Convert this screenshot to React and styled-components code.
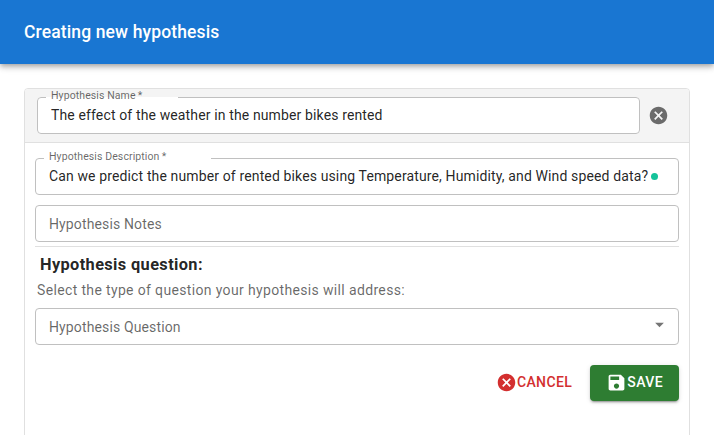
import React from "react";
import styled, { createGlobalStyle } from "styled-components";

const GlobalStyle = createGlobalStyle`
  *, *::before, *::after { box-sizing: border-box; }
  html, body { margin: 0; height: 100%; overflow: hidden; background: #fff; }
  body {
    font-family: Roboto, "Liberation Sans", sans-serif;
    font-size: 14px;
    line-height: 20px;
    letter-spacing: 0.131px;
    color: rgba(0, 0, 0, 0.87);
  }
`;

const Page = styled.div`
  display: flex;
  flex-direction: column;
  height: 100vh;
  overflow: hidden;
`;

const AppBar = styled.header`
  display: flex;
  align-items: center;
  flex: none;
  height: 64px;
  padding: 0 24px;
  background: #1976d2;
  color: #fff;
  box-shadow:
    0 2px 4px -1px rgba(0, 0, 0, 0.2),
    0 4px 5px 0 rgba(0, 0, 0, 0.14),
    0 1px 10px 0 rgba(0, 0, 0, 0.12);
`;

const Title = styled.h1`
  margin: 0;
  font-size: 17.5px;
  font-weight: 500;
  line-height: 28px;
`;

const Card = styled.main`
  flex: none;
  margin: 24px 24px 0;
  height: 400px;
  border: 1px solid #e0e0e0;
  border-radius: 4px;
  overflow: hidden;
`;

const CardHeader = styled.div`
  display: flex;
  align-items: center;
  gap: 8px;
  height: 54px;
  padding: 0 20px 0 12px;
  background: #f4f4f4;
  border-bottom: 1px solid #e0e0e0;
`;

const CardBody = styled.div`
  display: flex;
  flex-direction: column;
  padding: 15px 10px 0;
`;

const Field = styled.div`
  position: relative;
  display: flex;
  align-items: center;
  flex: ${(p) => (p.$grow ? "1" : "none")};
  height: 37px;
  padding: 0 14px;
  margin-top: ${(p) => p.$top || 0}px;
  background: #fff;
  border-radius: 4px;
  white-space: nowrap;
`;

const Outline = styled.fieldset`
  position: absolute;
  inset: -5px 0 0;
  margin: 0;
  padding: 0 8px;
  min-width: 0;
  border: 1px solid #c0c0c0;
  border-radius: 4px;
  pointer-events: none;
`;

const PlainOutline = styled(Outline)`
  inset: 0;
`;

const Notch = styled.legend`
  width: ${(p) => p.$width}px;
  height: 11px;
  padding: 0;
`;

const FloatingLabel = styled.label`
  position: absolute;
  top: 0;
  left: 0;
  transform-origin: top left;
  transform: translate(14px, -9px) scale(0.75);
  color: rgba(0, 0, 0, 0.6);
`;

const Value = styled.span`
  flex: none;
  padding-bottom: 2px;
`;

const Placeholder = styled.span`
  flex: 1;
  color: rgba(0, 0, 0, 0.6);
`;

const StatusDot = styled.i`
  flex: none;
  width: 7px;
  height: 7px;
  margin: 0 0 1px 2.5px;
  border-radius: 50%;
  background: #15c39a;
`;

const Divider = styled.hr`
  width: 100%;
  margin: 4px 0 0;
  border: 0;
  border-top: 1px solid #e0e0e0;
`;

const SectionTitle = styled.h3`
  margin: 8px 0 0 5px;
  font-size: 16.38px;
  font-weight: 700;
  line-height: 20px;
  letter-spacing: 0.37px;
`;

const HelpText = styled.p`
  margin: 5px 0 0 2px;
  letter-spacing: 0.35px;
  color: rgba(0, 0, 0, 0.6);
`;

const Actions = styled.div`
  display: flex;
  justify-content: flex-end;
  gap: 10px;
  margin-top: 20px;
`;

const Button = styled.button`
  display: flex;
  align-items: center;
  height: 36px;
  padding: 0 ${(p) => (p.$filled ? 16 : 8)}px 1px;
  border: 0;
  border-radius: 4px;
  font: 500 14px/24px Roboto, "Liberation Sans", sans-serif;
  letter-spacing: 0.4px;
  color: ${(p) => (p.$filled ? "#fff" : "#d32f2f")};
  background: ${(p) => (p.$filled ? "#2e7d32" : "transparent")};
  box-shadow: ${(p) =>
    p.$filled
      ? "0 3px 1px -2px rgba(0,0,0,.2), 0 2px 2px 0 rgba(0,0,0,.14), 0 1px 5px 0 rgba(0,0,0,.12)"
      : "none"};
`;

const ButtonText = styled.span`
  padding-bottom: 1px;
`;

const IconButton = styled.button`
  display: flex;
  padding: 0;
  border: 0;
  background: none;
  color: #6b6b6b;
`;

const Glyph = styled.svg`
  display: block;
  flex: none;
  width: ${(p) => p.$size}px;
  height: ${(p) => p.$size}px;
  fill: currentColor;
`;

const paths = {
  cancel:
    "M12 2C6.47 2 2 6.47 2 12s4.47 10 10 10 10-4.47 10-10S17.53 2 12 2zm5 13.59L15.59 17 12 13.41 8.41 17 7 15.59 10.59 12 7 8.41 8.41 7 12 10.59 15.59 7 17 8.41 13.41 12 17 15.59z",
  save: "M17 3H5c-1.11 0-2 .9-2 2v14c0 1.1.89 2 2 2h14c1.1 0 2-.9 2-2V7l-4-4zm-5 16c-1.66 0-3-1.34-3-3s1.34-3 3-3 3 1.34 3 3-1.34 3-3 3zm3-10H5V5h10v4z",
  arrow: "M7 10l5 5 5-5z",
};

const Icon = ({ name, size = 21 }) => (
  <Glyph viewBox="0 0 24 24" $size={size} aria-hidden="true">
    <path d={paths[name]} />
  </Glyph>
);

const SelectArrow = styled.span`
  display: flex;
  margin: -4px -5px 0 0;
  color: rgba(0, 0, 0, 0.54);
`;

function LabelledField({ label, notch, children, grow }) {
  return (
    <Field $grow={grow}>
      <FloatingLabel>{label}{"\u2009*"}</FloatingLabel>
      {children}
      <Outline>
        <Notch $width={notch} />
      </Outline>
    </Field>
  );
}

export default function App() {
  return (
    <Page>
      <GlobalStyle />
      <AppBar>
        <Title>Creating new hypothesis</Title>
      </AppBar>
      <Card>
        <CardHeader>
          <LabelledField label="Hypothesis Name" notch={132} grow>
            <Value>The effect of the weather in the number bikes rented</Value>
          </LabelledField>
          <IconButton aria-label="Remove">
            <Icon name="cancel" />
          </IconButton>
        </CardHeader>
        <CardBody>
          <LabelledField label="Hypothesis Description" notch={167}>
            <Value>
              Can we predict the number of rented bikes using Temperature, Humidity, and Wind speed data?
            </Value>
            <StatusDot />
          </LabelledField>
          <Field $top={10}>
            <Placeholder>Hypothesis Notes</Placeholder>
            <PlainOutline />
          </Field>
          <Divider />
          <SectionTitle>Hypothesis question:</SectionTitle>
          <HelpText>Select the type of question your hypothesis will address:</HelpText>
          <Field $top={8}>
            <Placeholder>Hypothesis Question</Placeholder>
            <SelectArrow>
              <Icon name="arrow" />
            </SelectArrow>
            <PlainOutline />
          </Field>
          <Actions>
            <Button>
              <Icon name="cancel" />
              <ButtonText>CANCEL</ButtonText>
            </Button>
            <Button $filled>
              <Icon name="save" />
              <ButtonText>SAVE</ButtonText>
            </Button>
          </Actions>
        </CardBody>
      </Card>
    </Page>
  );
}
